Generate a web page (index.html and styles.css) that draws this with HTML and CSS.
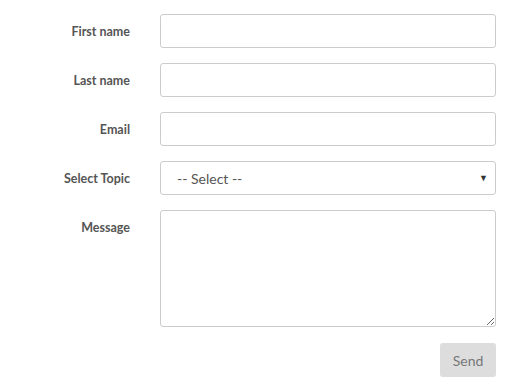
FILE: index.html
```html
<!DOCTYPE html>
<html lang="en">
<head>
    <meta charset="UTF-8">
    <meta name="viewport" content="width=device-width, initial-scale=1.0">
    <title>Contact</title>
    <link rel="stylesheet" href="styles.css">
</head>
<body>

    <form class="contact-form">
        <label class="form-label" for="first-name">First name</label>
        <input class="form-control" type="text" id="first-name">

        <label class="form-label" for="last-name">Last name</label>
        <input class="form-control" type="text" id="last-name">

        <label class="form-label" for="email">Email</label>
        <input class="form-control" type="email" id="email">

        <label class="form-label" for="topic">Select Topic</label>
        <div class="select-wrap">
            <select class="form-control form-select" id="topic">
                <option>-- Select --</option>
            </select>
            <span class="select-arrow">&#9660;</span>
        </div>

        <label class="form-label" for="message">Message</label>
        <textarea class="form-control form-textarea" id="message"></textarea>

        <div class="form-actions">
            <button class="send-button" type="button">Send</button>
        </div>
    </form>

</body>
</html>
```

FILE: styles.css
```css
body {
    font-family: 'Lato', sans-serif;
    margin: 0;
    padding: 0;
    background: #fff;
    color: #555;
}

.contact-form {
    display: grid;
    grid-template-columns: 130px 336px;
    column-gap: 30px;
    row-gap: 15px;
    padding-top: 14px;
}

.form-label {
    text-align: right;
    font-size: 12.5px;
    font-weight: 700;
    color: #555;
    padding-top: 10px;
}

.form-control {
    box-sizing: border-box;
    width: 336px;
    height: 34px;
    margin: 0;
    border: 1px solid #ccc;
    border-radius: 3px;
    background: #fff;
    font-family: 'Lato', sans-serif;
    font-size: 14px;
    color: #555;
    padding: 0 12px;
}

.select-wrap {
    position: relative;
}

.form-select {
    appearance: none;
    -webkit-appearance: none;
    padding-left: 16px;
}

.select-arrow {
    position: absolute;
    right: 8px;
    top: 11px;
    font-size: 9px;
    color: #333;
    pointer-events: none;
}

.form-textarea {
    height: 117px;
    padding: 6px 12px;
    resize: vertical;
}

.form-actions {
    grid-column: 2;
    display: flex;
    justify-content: flex-end;
    padding-top: 1px;
}

.send-button {
    width: 56px;
    height: 34px;
    border: none;
    border-radius: 3px;
    background: #ddd;
    color: #777;
    font-family: 'Lato', sans-serif;
    font-size: 14px;
    cursor: pointer;
}
```
